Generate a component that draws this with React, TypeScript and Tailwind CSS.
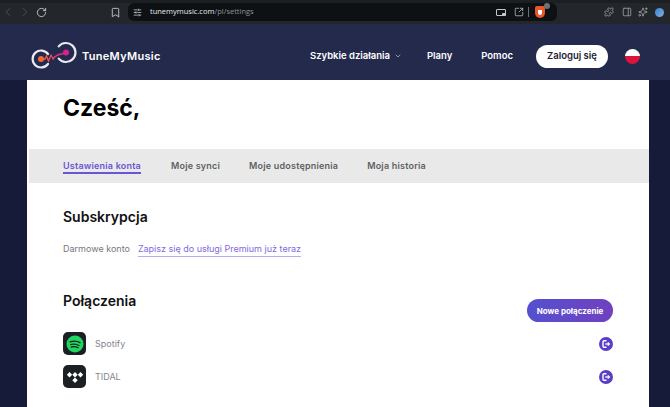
import { ChevronLeft, ChevronRight, RotateCw, Bookmark, SlidersHorizontal, ChevronDown, SquareArrowOutUpRight, Puzzle, PanelRight, Sparkles } from "lucide-react";

const tabs = ["Ustawienia konta", "Moje synci", "Moje udostępnienia", "Moja historia"];

function LogoutBadge() {
  return (
    <span className="flex h-[14px] w-[14px] items-center justify-center rounded-full bg-[#5a3fc4]">
      <svg viewBox="0 0 14 14" className="h-[14px] w-[14px]" fill="none" stroke="#fff" strokeWidth="1.4">
        <path d="M7.5 3.8H5a1 1 0 0 0-1 1v4.400a1 1 0 0 0 1 1h2.500" />
        <path d="M6.300 7h3.800" />
        <path d="M8.800 5.300 10.500 7 8.800 8.700" strokeWidth="1.100" />
      </svg>
    </span>
  );
}

function BrowserBar() {
  return (
    <div className="flex h-6 items-center border-t-[3px] border-[#1c1f22] bg-[#23272b] pb-[3px] text-[#9ba0a4]">
      <ChevronLeft className="ml-[1px] h-[14px] w-[14px] text-[#50555a]" strokeWidth={1.5} />
      <ChevronRight className="ml-[3px] h-[14px] w-[14px] text-[#50555a]" strokeWidth={1.5} />
      <RotateCw className="ml-[4px] h-[11px] w-[11px] text-[#c3c7ca]" strokeWidth={2} />
      <Bookmark className="ml-[63px] h-[11px] w-[11px] text-[#c3c7ca]" strokeWidth={2} />
      <div className="ml-[7px] flex h-[18px] w-[429px] items-center rounded-[6px] bg-[#0e1114]">
        <SlidersHorizontal className="ml-[5px] h-[9px] w-[9px] text-[#d0d3d6]" />
        <span className="ml-[8px] font-['Open_Sans',sans-serif] text-[7.5px] text-[#e8eaec]">
          tunemymusic.com<span className="text-[#8d9296]">/pl/settings</span>
        </span>
        <span className="relative ml-auto h-[7px] w-[10px] rounded-[1px] border border-[#c3c7ca]">
          <span className="absolute -bottom-px -right-px h-[3px] w-[4px] rounded-[1px] bg-[#c3c7ca]" />
        </span>
        <SquareArrowOutUpRight className="ml-[8px] h-[10px] w-[10px] text-[#c3c7ca]" strokeWidth={1.8} />
        <span className="ml-[4px] h-[10px] w-px bg-[#6b7074]" />
        <span className="relative ml-[6px] mr-[12px] flex h-[12px] w-[10px] items-center justify-center rounded-b-[5px] rounded-t-[2px] bg-[#e8562a]">
          <span className="h-[5px] w-[4px] rounded-b-[2px] bg-white" />
          <span className="absolute -right-[5px] -top-[3px] h-[6px] w-[6px] rounded-full bg-[#6d7276]" />
        </span>
      </div>
      <Puzzle className="ml-[47px] h-[10px] w-[10px]" strokeWidth={2} />
      <PanelRight className="ml-[8px] h-[10px] w-[10px]" strokeWidth={2} />
      <Sparkles className="ml-[6px] h-[10px] w-[10px]" strokeWidth={2} />
      <span className="ml-[7px] h-[9px] w-[9px] rounded-full bg-gradient-to-br from-[#3f7fd0] to-[#7fb2d9]" />
    </div>
  );
}

function Logo() {
  return (
    <svg viewBox="0 0 48 30" className="h-[30px] w-[48px]">
      <defs>
        <linearGradient id="wave" x1="0" x2="1" y1="0" y2="0">
          <stop offset="0" stopColor="#f26a33" />
          <stop offset="1" stopColor="#d61f94" />
        </linearGradient>
      </defs>
      <path d="M17 13A8.500 8.500 0 1 0 17 23" fill="none" stroke="#e9e9f0" strokeWidth="2.2" strokeLinecap="round" />
      <path d="M27.700 5.400A9.500 9.500 0 1 1 27.700 17.600" fill="none" stroke="#e9e9f0" strokeWidth="2.2" strokeLinecap="round" />
      <path d="M10 18h4l1.500-3 2 5 2.500-6 2 4 2-2.500c1 0 2-1.500 4-2l7-1.500" fill="none" stroke="url(#wave)" strokeWidth="1.3" />
      <circle cx="10" cy="18" r="3" fill="#f26a33" />
      <circle cx="35" cy="11.500" r="3" fill="#d61f94" />
    </svg>
  );
}

function Header() {
  return (
    <header className="flex h-14 items-center bg-[#242a4c] pl-[31px] pr-[30px] pt-2 text-white">
      <Logo />
      <span className="ml-[3px] text-[11px] font-semibold tracking-[0.3px]">TuneMyMusic</span>
      <nav className="ml-auto flex items-center text-[9.5px] font-semibold">
        <span>Szybkie działania</span>
        <ChevronDown className="ml-[4px] h-[8px] w-[8px] text-[#c5c8d6]" />
        <span className="ml-[25px]">Plany</span>
        <span className="ml-[29px]">Pomoc</span>
        <span className="ml-[23px] flex h-[23px] w-[72px] items-center justify-center rounded-full bg-white text-[#1d1f33]">Zaloguj się</span>
        <span className="ml-[17px] flex h-[15px] w-[15px] flex-col overflow-hidden rounded-full">
          <span className="flex-1 bg-white" />
          <span className="flex-1 bg-[#dc143c]" />
        </span>
      </nav>
    </header>
  );
}

function Connection({ name, icon }: { name: string; icon: React.ReactNode }) {
  return (
    <div className="flex h-[33px] items-center">
      <span className="flex h-[23px] w-[23px] items-center justify-center rounded-[5px] bg-[#1c1f23]">{icon}</span>
      <span className="ml-[9px] text-[9px] text-[#85858c]">{name}</span>
      <span className="ml-auto">
        <LogoutBadge />
      </span>
    </div>
  );
}

export default function App() {
  return (
    <div className="flex h-[407px] w-[670px] flex-col overflow-hidden bg-[#161b39] font-['Inter',sans-serif]">
      <BrowserBar />
      <Header />
      <main className="ml-[27px] mr-[21px] flex-1 bg-white">
        <h1 className="pl-[36px] pt-[14px] text-[23px] leading-[29px] font-bold text-black">Cześć,</h1>
        <div className="ml-[2px] mt-[26px] flex h-[34px] items-center gap-[29px] bg-[#e9e9e9] pl-[34px] text-[9px] font-semibold tracking-[0.2px] text-[#5f5f63]">
          {tabs.map((tab, index) => (
            <span key={tab} className={index === 0 ? "mr-px border-b-2 border-[#6a55d4] leading-[13px] text-[#6a55d4]" : "border-b-2 border-transparent leading-[13px]"}>
              {tab}
            </span>
          ))}
        </div>
        <div className="px-[36px]">
          <h2 className="mt-[24px] text-[14px] leading-[20px] font-semibold text-[#111]">Subskrypcja</h2>
          <p className="mt-[15px] flex text-[9px] leading-[14px]">
            <span className="text-[#77777d]">Darmowe konto</span>
            <span className="ml-[8px] border-b border-[#b9abec] text-[#7f6ae0]">Zapisz się do usługi Premium już teraz</span>
          </p>
          <div className="mt-[34px] flex items-start justify-between">
            <h2 className="text-[14px] leading-[20px] font-semibold text-[#111]">Połączenia</h2>
            <button className="mt-[8px] h-[23px] w-[86px] rounded-full bg-gradient-to-r from-[#5450d0] to-[#6f40bf] text-[8px] font-bold text-white">
              Nowe połączenie
            </button>
          </div>
          <div className="mt-[5px]">
            <Connection
              name="Spotify"
              icon={
                <svg viewBox="0 0 18 18" className="h-[18px] w-[18px]">
                  <circle cx="9" cy="9" r="8.500" fill="#1ed760" />
                  <path d="M4 6.800c3.300-1 7-.8 10 .8M4.700 9.500c2.800-.8 5.800-.5 8.300 1M5.300 12c2.300-.6 4.700-.4 6.800.8" fill="none" stroke="#1c1f23" strokeWidth="1.300" strokeLinecap="round" />
                </svg>
              }
            />
            <Connection
              name="TIDAL"
              icon={
                <svg viewBox="0 0 18 18" className="h-[18px] w-[18px]" fill="#fff">
                  <path d="M3.500 4l2.700 2.700-2.700 2.700L.8 6.700zM9 4l2.700 2.700L9 9.400 6.300 6.700zM14.500 4l2.700 2.700-2.700 2.700-2.700-2.700zM9 9.600l2.700 2.700L9 15l-2.700-2.700z" />
                </svg>
              }
            />
          </div>
        </div>
      </main>
    </div>
  );
}
